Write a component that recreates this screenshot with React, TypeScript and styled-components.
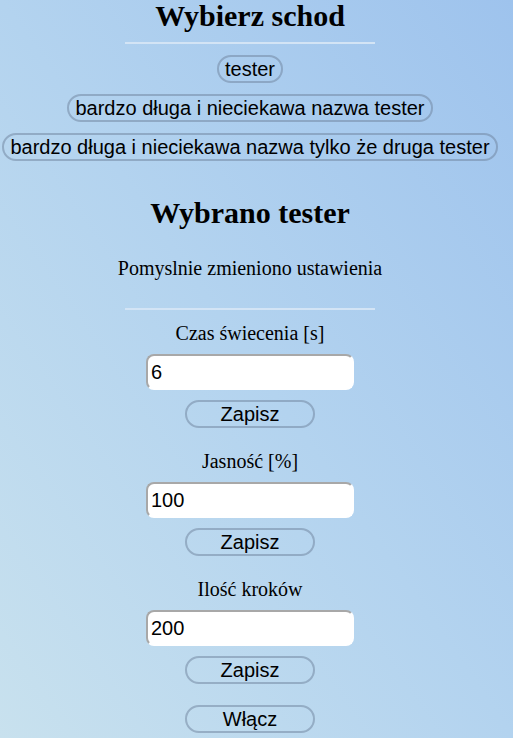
import React from 'react';
import styled, { createGlobalStyle } from 'styled-components';

const GlobalStyle = createGlobalStyle`
	html, body {
		margin: 0;
		padding: 0;
	}

	body {
		background: linear-gradient(to top right, #c8e1ee 0%, #b3d3ef 50%, #9ec3ed 100%);
		min-height: 738px;
		font-family: 'Liberation Serif', 'Times New Roman', serif;
		color: #000;
	}
`;

const StyledPage = styled.div`
	width: 500px;
	display: flex;
	flex-direction: column;
	align-items: center;
	text-align: center;
`;

const Title = styled.h1<{ top?: string }>`
	margin: ${(p) => p.top || '0'} 0 0;
	font-size: 30px;
	font-weight: bold;
	line-height: 32px;
`;

const Divider = styled.hr<{ top?: string }>`
	width: 250px;
	height: 2px;
	margin: ${(p) => p.top || '10px'} 0 0;
	border: none;
	background: #d3e4f5;
`;

const StairList = styled.div`
	display: flex;
	flex-direction: column;
	align-items: center;
	gap: 11px;
	margin-top: 11px;
`;

const PillButton = styled.button<{ wide?: boolean }>`
	box-sizing: border-box;
	height: 28px;
	font-family: 'Liberation Sans', Arial, sans-serif;
	font-size: 20px;
	line-height: 22px;
	color: #000;
	background: transparent;
	border: 2px solid rgba(110, 130, 155, 0.5);
	border-radius: 14px;
	padding: 0 6px;
	width: ${(p) => (p.wide ? '130px' : 'auto')};
	cursor: pointer;
`;

const Message = styled.p`
	margin: 28px 0 0;
	font-size: 20px;
	line-height: 23px;
`;

const Settings = styled.div`
	display: flex;
	flex-direction: column;
	align-items: center;
	margin-top: 12px;
	gap: 22px;
`;

const Setting = styled.div`
	display: flex;
	flex-direction: column;
	align-items: center;
`;

const Label = styled.label`
	font-size: 20px;
	line-height: 23px;
`;

const Input = styled.input`
	box-sizing: border-box;
	width: 208px;
	height: 36px;
	margin: 9px 0 10px;
	padding: 0 3px;
	font-family: 'Liberation Sans', Arial, sans-serif;
	font-size: 20px;
	color: #000;
	background: #fff;
	border: 2px solid #fff;
	border-top-color: #a8a8a8;
	border-left-color: #a8a8a8;
	border-radius: 8px;
	outline: none;
`;

const ToggleWrap = styled.div`
	margin-top: 21px;
`;

const settings = [
	{ label: 'Czas świecenia [s]', value: '6' },
	{ label: 'Jasność [%]', value: '100' },
	{ label: 'Ilość kroków', value: '200' },
];

const App = () => {
	return (
		<>
			<GlobalStyle />
			<StyledPage>
				<Title>Wybierz schod</Title>
				<Divider />
				<StairList>
					<PillButton>tester</PillButton>
					<PillButton>bardzo długa i nieciekawa nazwa tester</PillButton>
					<PillButton>bardzo długa i nieciekawa nazwa tylko że druga tester</PillButton>
				</StairList>
				<Title top="36px">Wybrano tester</Title>
				<Message>Pomyslnie zmieniono ustawienia</Message>
				<Divider top="28px" />
				<Settings>
					{settings.map((s) => (
						<Setting key={s.label}>
							<Label>{s.label}</Label>
							<Input defaultValue={s.value} />
							<PillButton wide>Zapisz</PillButton>
						</Setting>
					))}
				</Settings>
				<ToggleWrap>
					<PillButton wide>Włącz</PillButton>
				</ToggleWrap>
			</StyledPage>
		</>
	);
};

export default App;
